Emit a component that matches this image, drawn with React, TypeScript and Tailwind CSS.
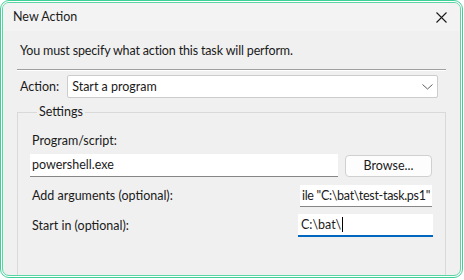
const FONT = "font-['Segoe_UI','Lato',sans-serif]";

function Chevron() {
  return (
    <svg width="11" height="6" viewBox="0 0 11 6" fill="none" stroke="#5f5f5f" strokeWidth="1">
      <path d="M0.5 0.5 L5.5 5 L10.5 0.5" />
    </svg>
  );
}

function CloseX() {
  return (
    <svg width="11" height="11" viewBox="0 0 11 11" fill="none" stroke="#1a1a1a" strokeWidth="1.1">
      <path d="M0.5 0.5 L10.5 10.5 M10.5 0.5 L0.5 10.5" />
    </svg>
  );
}

export default function App() {
  return (
    <div className={`h-[280px] w-[464px] bg-white text-[12.5px] leading-[16px] text-[#1a1a1a] ${FONT}`}>
      <div className="h-[278px] w-[463px] rounded-[9px] border border-[#3fd097] bg-white p-px">
        <div className="flex h-full flex-col overflow-hidden rounded-[7px] border border-[#5ad6a4] bg-[#f0f0f0]">
          {/* title bar */}
          <div className="flex h-[28px] shrink-0 items-center justify-between bg-[#f3f3f3] pl-[10px] pr-[13px]">
            <span className="text-[#1c1c1c]">New Action</span>
            <CloseX />
          </div>

          {/* body */}
          <div className="flex flex-1 flex-col px-[14px] pt-[12px]">
            <p className="pl-[3px] tracking-[-0.15px]">You must specify what action this task will perform.</p>
            <div className="mt-[10px] border-t border-b border-t-[#a0a0a0] border-b-white" />

            <div className="mt-[4px] flex items-center gap-[8px] pl-[3px] pr-[8px]">
              <span>Action:</span>
              <div className="flex h-[23px] flex-1 items-center justify-between rounded-[2px] border border-[#cccccc] bg-white pl-[4px] pr-[4px]">
                <span>Start a program</span>
                <Chevron />
              </div>
            </div>

            <fieldset className="mt-[6px] flex-1 border border-b-0 border-[#d9d9d9] pl-[12px] pr-[13px]">
              <legend className="ml-[7px] px-[2px]">Settings</legend>

              <div className="mt-[13px] pl-[2px]">Program/script:</div>
              <div className="mt-[5px] flex items-center gap-[7px]">
                <div className="flex h-[23px] flex-1 items-center border-b border-[#868686] bg-white pl-[2px]">
                  powershell.exe
                </div>
                <button className="h-[22px] w-[87px] rounded-[4px] border border-[#d0d0d0] bg-[#fdfdfd]">
                  Browse...
                </button>
              </div>

              <div className="mt-[8px] flex items-center justify-between">
                <span className="pl-[2px]">Add arguments (optional):</span>
                <div className="flex h-[22px] w-[132px] items-center overflow-hidden whitespace-nowrap border-b border-[#868686] bg-white pl-[2px] tracking-[-0.3px]">
                  ile "C:\bat\test-task.ps1"
                </div>
              </div>

              <div className="mt-[7px] flex items-center justify-between">
                <span className="pl-[2px]">Start in (optional):</span>
                <div className="-mr-[1px] flex h-[23px] w-[135px] items-center border-b-2 border-[#0067c0] bg-white pl-[3px]">
                  C:\bat\
                  <span className="ml-px h-[15px] w-px bg-black" />
                </div>
              </div>
            </fieldset>
          </div>
        </div>
      </div>
    </div>
  );
}
